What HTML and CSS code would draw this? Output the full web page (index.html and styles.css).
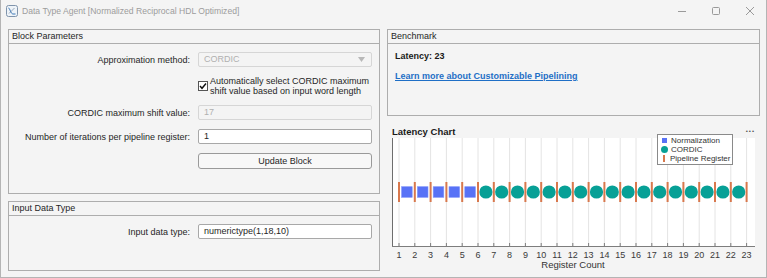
FILE: index.html
```html
<!DOCTYPE html>
<html lang="en">
<head>
    <meta charset="UTF-8">
    <title>Data Type Agent</title>
    <link rel="stylesheet" href="styles.css">
</head>
<body>
<div class="window">
    <div class="titlebar">
        <svg class="app-icon" width="12" height="12" viewBox="0 0 12 12">
            <rect x="0.5" y="0.5" width="11" height="11" rx="2" fill="#eef3f8" stroke="#7f93ab"/>
            <path d="M2.5 3 C4 3 4.5 9 7 9 L9.5 9" fill="none" stroke="#3d79b8" stroke-width="1"/>
            <path d="M3 8.5 L8.5 3" fill="none" stroke="#7f93ab" stroke-width="0.8"/>
        </svg>
        <span class="title">Data Type Agent [Normalized Reciprocal HDL Optimized]</span>
        <div class="controls">
            <svg width="10" height="10" viewBox="0 0 10 10"><path d="M1 5.5 H9" stroke="#9a9a9a"/></svg>
            <svg width="10" height="10" viewBox="0 0 10 10"><rect x="1.5" y="1.5" width="7" height="7" rx="1" fill="none" stroke="#9a9a9a"/></svg>
            <svg width="10" height="10" viewBox="0 0 10 10"><path d="M1 1 L9 9 M9 1 L1 9" stroke="#9a9a9a"/></svg>
        </div>
    </div>

    <div class="content">
        <div class="col-left">
            <div class="panel block-params">
                <div class="panel-title">Block Parameters</div>
                <div class="panel-body form">
                    <div class="row">
                        <label>Approximation method:</label>
                        <div class="select disabled">CORDIC
                            <svg class="arrow" width="7" height="5" viewBox="0 0 7 5"><path d="M0 0 H7 L3.5 5 Z" fill="#b8b8b8"/></svg>
                        </div>
                    </div>
                    <div class="row check-row">
                        <span></span>
                        <div class="check">
                            <span class="box">
                                <svg width="8" height="8" viewBox="0 0 8 8"><path d="M1 4 L3 6.3 L7 1.5" fill="none" stroke="#111" stroke-width="1.4"/></svg>
                            </span>
                            <span>Automatically select CORDIC maximum shift value based on input word length</span>
                        </div>
                    </div>
                    <div class="row">
                        <label>CORDIC maximum shift value:</label>
                        <div class="field disabled">17</div>
                    </div>
                    <div class="row">
                        <label>Number of iterations per pipeline register:</label>
                        <div class="field">1</div>
                    </div>
                    <div class="row">
                        <span></span>
                        <button class="btn">Update Block</button>
                    </div>
                </div>
            </div>

            <div class="panel input-type">
                <div class="panel-title">Input Data Type</div>
                <div class="panel-body form">
                    <div class="row">
                        <label>Input data type:</label>
                        <div class="field">numerictype(1,18,10)</div>
                    </div>
                </div>
            </div>
        </div>

        <div class="col-right">
            <div class="panel benchmark">
                <div class="panel-title">Benchmark</div>
                <div class="panel-body bench-body">
                    <div class="latency">Latency: 23</div>
                    <a class="link" href="#">Learn more about Customizable Pipelining</a>
                </div>
            </div>

            <div class="chart">
                <div class="chart-title">Latency Chart</div>
                <span class="more">&bull;&bull;&bull;</span>
                <svg id="plot" width="379" height="138" viewBox="0 0 379 138"></svg>
                <div class="legend">
                    <div class="item"><span class="m-square"></span>Normalization</div>
                    <div class="item"><span class="m-circle"></span>CORDIC</div>
                    <div class="item"><span class="m-bar"></span>Pipeline Register</div>
                </div>
            </div>
        </div>
    </div>
</div>

<script>
// build the latency chart: 23 pipeline registers, 5 normalization stages, 17 CORDIC stages
document.addEventListener("DOMContentLoaded", function() {
    const svg = document.getElementById("plot");
    const x0 = 12, step = 15.8, axisY = 108, midY = 54;
    let out = "";

    out += `<rect x="5" y="0" width="363" height="${axisY}" fill="#fff"/>`;

    for (let i = 1; i <= 23; i++) {
        let x = x0 + (i - 1) * step;
        out += `<line x1="${x}" y1="0" x2="${x}" y2="${axisY}" stroke="#e4e4e4" stroke-width="1"/>`;
    }

    out += `<line x1="5.5" y1="0" x2="5.5" y2="${axisY + 0.5}" stroke="#6e6e6e"/>`;
    out += `<line x1="5" y1="${axisY + 0.5}" x2="368" y2="${axisY + 0.5}" stroke="#7d7d7d"/>`;

    for (let i = 1; i <= 22; i++) {
        let cx = x0 + (i - 0.5) * step;
        if (i <= 5) {
            out += `<rect x="${cx - 5.3}" y="${midY - 5.3}" width="10.6" height="10.6" fill="#5872f6" stroke="#7e92fa" stroke-width="0.6"/>`;
        } else {
            out += `<circle cx="${cx}" cy="${midY}" r="6.6" fill="#07a096"/>`;
        }
    }

    for (let i = 1; i <= 23; i++) {
        let x = x0 + (i - 1) * step;
        out += `<rect x="${x - 1}" y="${midY - 10}" width="2" height="20" fill="#d8784d"/>`;
        out += `<line x1="${x}" y1="${axisY - 3}" x2="${x}" y2="${axisY}" stroke="#7d7d7d"/>`;
        out += `<text x="${x}" y="119.5" class="tick">${i}</text>`;
    }

    out += `<text x="186" y="130" class="xlabel">Register Count</text>`;
    svg.innerHTML = out;
});
</script>
</body>
</html>
```

FILE: styles.css
```css
body { margin: 0; font-family: "Liberation Sans", Arial, sans-serif; font-size: 9px; color: #262626; background: #f4f4f4; }

.window { width: 767px; height: 278px; box-sizing: border-box; border: 1px solid #b4b4b4; border-top: none; background: #f4f4f4; display: flex; flex-direction: column; }

.titlebar { height: 22px; flex: none; display: flex; align-items: center; padding-left: 5px; }
.app-icon { flex: none; }
.title { margin-left: 4px; color: #9c9c9c; font-size: 8.6px; }
.controls { margin-left: auto; display: flex; align-items: center; gap: 24px; padding-right: 11px; }

.content { flex: 1; display: flex; gap: 7px; padding: 7px 0 0 7px; }
.col-left { width: 372px; display: flex; flex-direction: column; gap: 7px; }
.col-right { flex: 1; display: flex; flex-direction: column; }

.panel { border: 1px solid #adadad; box-sizing: border-box; display: flex; flex-direction: column; }
.panel-title { height: 13px; line-height: 13px; padding-left: 3px; border-bottom: 1px solid #adadad; color: #262626; }
.block-params { height: 165px; }
.input-type { height: 70px; }
.benchmark { height: 87px; margin-right: 6px; }

.form { display: flex; flex-direction: column; gap: 9px; padding: 8px 7px 0 0; }
.row { display: grid; grid-template-columns: 181px 174px; column-gap: 8px; align-items: center; }
.row label { text-align: right; color: #262626; }

.select, .field { height: 15px; box-sizing: border-box; border: 1px solid #a8a8a8; border-radius: 2px; background: #fff; padding: 0 5px; line-height: 13px; position: relative; }
.disabled { background: #f4f4f4; border-color: #d6d6d6; color: #b0b0b0; }
.select .arrow { position: absolute; right: 6px; top: 4px; }

.check-row { align-items: start; }
.check { display: flex; align-items: center; gap: 2px; line-height: 10px; }
.check .box { flex: none; width: 10px; height: 10px; box-sizing: border-box; border: 1px solid #555; background: #fff; display: flex; align-items: center; justify-content: center; }

.btn { height: 16px; padding: 0; border: 1px solid #9a9a9a; border-radius: 3px; background: #f8f8f8; font-family: "Liberation Sans", Arial, sans-serif; font-size: 9px; color: #262626; }

.bench-body { padding: 7px 0 0 7px; }
.latency { font-weight: bold; line-height: 11px; color: #1a1a1a; }
.link { display: inline-block; margin-top: 9px; font-weight: bold; line-height: 11px; color: #1f6fc6; }

.chart { position: relative; margin-top: 4px; flex: 1; }
.chart-title { padding: 6px 0 0 5px; height: 12px; line-height: 12px; font-size: 9.5px; font-weight: bold; color: #1a1a1a; }
.more { position: absolute; right: 11px; top: 8px; font-size: 6px; line-height: 6px; letter-spacing: 1px; color: #555; }
#plot { display: block; }
.tick { font-family: "Liberation Sans", Arial, sans-serif; font-size: 9px; fill: #3a3a3a; text-anchor: middle; }
.xlabel { font-family: "Liberation Sans", Arial, sans-serif; font-size: 9.5px; fill: #333; text-anchor: middle; }

.legend { position: absolute; left: 270px; top: 14px; width: 76px; height: 31px; box-sizing: border-box; border: 1px solid #8a8a8a; background: #fff; padding: 1px 0 0 3px; font-size: 8px; line-height: 9px; color: #333; }
.legend .item { display: flex; align-items: center; white-space: nowrap; }
.m-square, .m-circle, .m-bar { flex: none; margin-right: 4px; }
.m-square { width: 5px; height: 5px; background: #5872f6; margin-left: 1px; }
.m-circle { width: 7px; height: 7px; border-radius: 50%; background: #07a096; margin-right: 3px; }
.m-bar { width: 2px; height: 7px; background: #d8784d; margin-left: 2px; margin-right: 5px; }
```
